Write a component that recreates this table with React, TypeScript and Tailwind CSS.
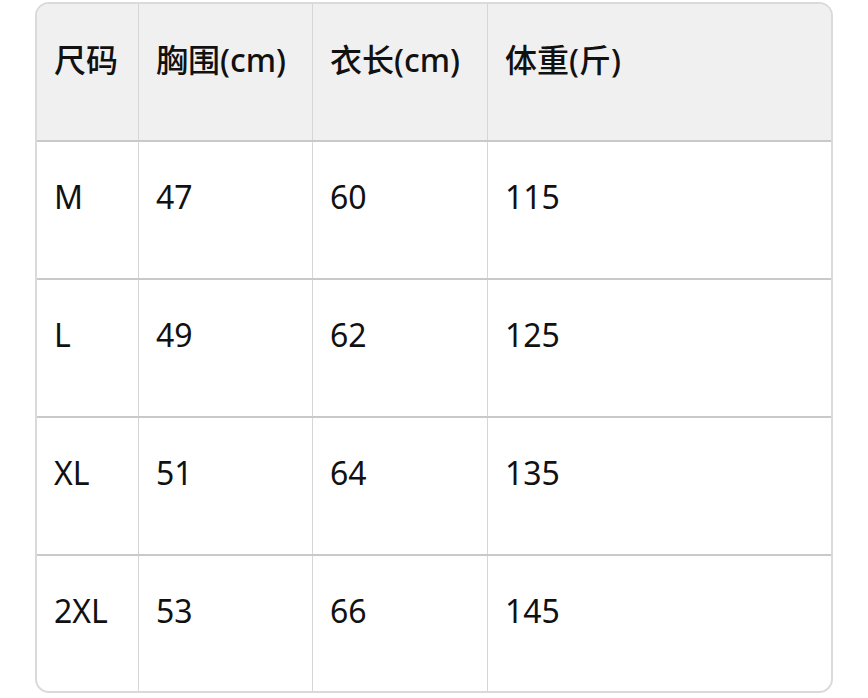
const header = ["尺码", "胸围(cm)", "衣长(cm)", "体重(斤)"];

const rows = [
  ["M", "47", "60", "115"],
  ["L", "49", "62", "125"],
  ["XL", "51", "64", "135"],
  ["2XL", "53", "66", "145"],
];

const cols = "grid grid-cols-[102px_174px_175px_1fr]";

export default function App() {
  return (
    <div
      className="min-h-screen bg-white pt-[2px] pl-[35px] text-[#111]"
      style={{ fontFamily: '"Noto Sans", "Noto Sans CJK SC", sans-serif' }}
    >
      <div className="w-[798px] overflow-hidden rounded-[14px] border-2 border-[#dadada]">
        <div className={`${cols} h-[138px] border-b-2 border-[#c9c9c9] bg-[#f0f0f0]`}>
          {header.map((h, i) => (
            <div
              key={h}
              className={`px-[17px] pt-[36px] text-[32px] font-medium leading-[40px] ${
                i < 3 ? "border-r border-[#d6d6d6]" : ""
              }`}
            >
              {h}
            </div>
          ))}
        </div>
        {rows.map((r, ri) => (
          <div
            key={r[0]}
            className={`${cols} ${
              ri < rows.length - 1 ? "h-[138px] border-b-2 border-[#c9c9c9]" : "h-[135px]"
            }`}
          >
            {r.map((c, i) => (
              <div
                key={i}
                className={`px-[17px] pt-[35px] text-[32px] leading-[40px] ${
                  i < 3 ? "border-r border-[#d6d6d6]" : ""
                }`}
              >
                {c}
              </div>
            ))}
          </div>
        ))}
      </div>
    </div>
  );
}
